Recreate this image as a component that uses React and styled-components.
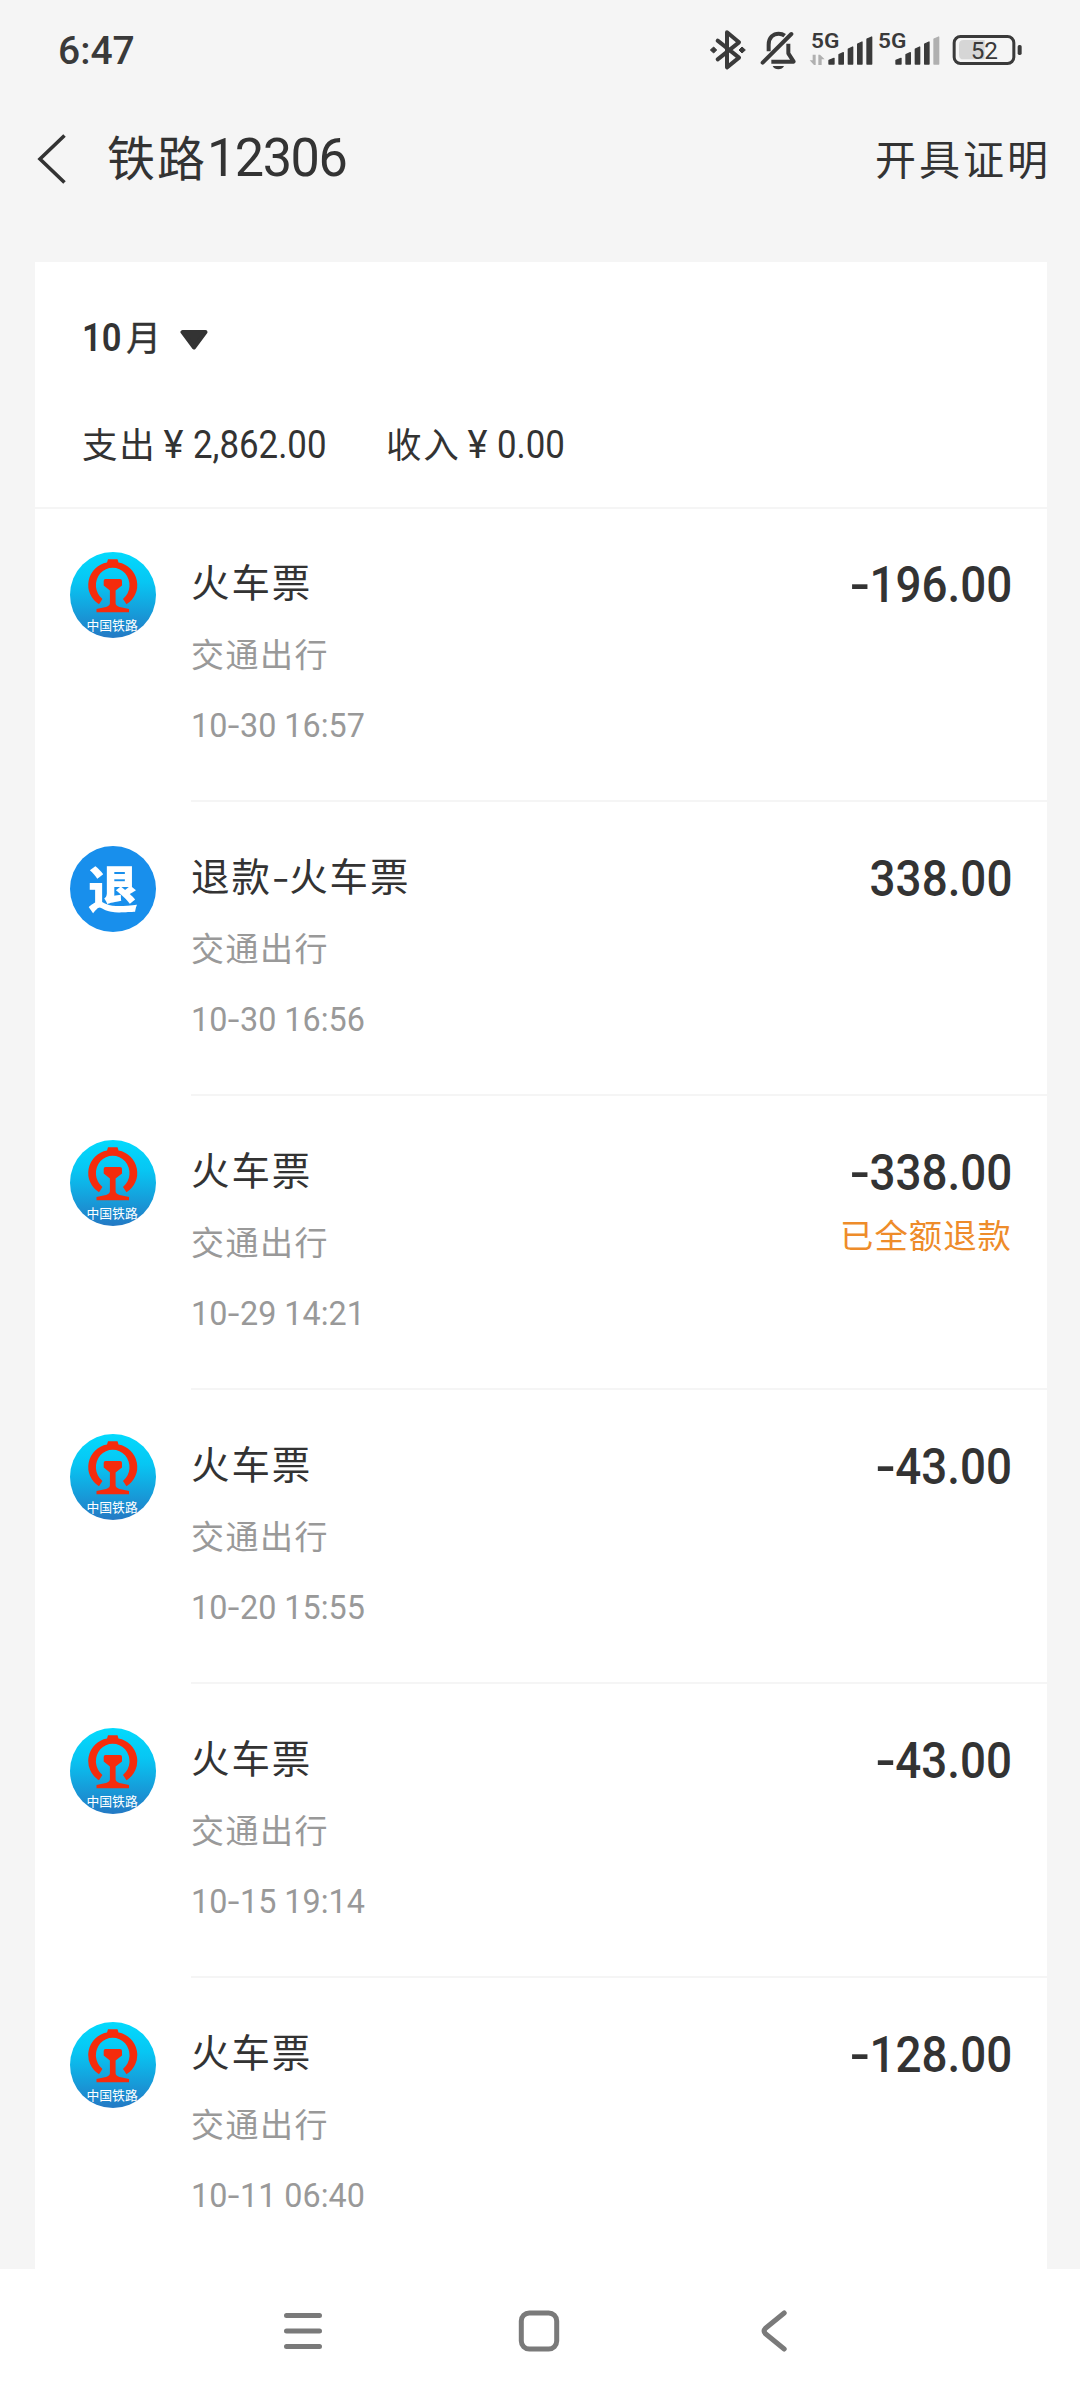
import styled, { createGlobalStyle } from 'styled-components';

const RECORDS = [
  { id: 1, title: '火车票', time: '10-30 16:57', amount: '-196.00' },
  { id: 2, title: '退款-火车票', time: '10-30 16:56', amount: '338.00', refund: true },
  { id: 3, title: '火车票', time: '10-29 14:21', amount: '-338.00', note: '已全额退款' },
  { id: 4, title: '火车票', time: '10-20 15:55', amount: '-43.00' },
  { id: 5, title: '火车票', time: '10-15 19:14', amount: '-43.00' },
  { id: 6, title: '火车票', time: '10-11 06:40', amount: '-128.00' },
];

export default function App() {
  return (
    <Screen>
      <GlobalStyle />
      <StatusBar />

      <Header>
        <BackIcon viewBox="0 0 30 50">
          <path d="M27.5 1.5 L3 25 L27.5 48.5" fill="none" stroke="#333" strokeWidth="3.6" />
        </BackIcon>
        <Title>铁路<TitleDigits>12306</TitleDigits></Title>
        <Action>开具证明</Action>
      </Header>

      <Card>
        <Summary>
          <Month>
            <MonthDigits>10</MonthDigits>
            <span>月</span>
            <Caret viewBox="0 0 28 20">
              <path d="M2.5 2 H25.5 L14 17.5 Z" fill="#333" stroke="#333" strokeWidth="4" strokeLinejoin="round" />
            </Caret>
          </Month>
          <Totals>
            <Total $w={304}>支出<Yen>¥</Yen><Sum>2,862.00</Sum></Total>
            <Total>收入<Yen>¥</Yen><Sum>0.00</Sum></Total>
          </Totals>
        </Summary>

        {RECORDS.map(r => (
          <Row key={r.id}>
            {r.refund ? <RefundBadge>退</RefundBadge> : <RailwayLogo id={r.id} />}
            <Detail>
              <Info>
                <Name><Dashed text={r.title} /></Name>
                <Category>交通出行</Category>
                <Time><Dashed text={r.time} /></Time>
              </Info>
              <Right>
                <Amount><Dashed text={r.amount} /></Amount>
                {r.note && <Note>{r.note}</Note>}
              </Right>
            </Detail>
          </Row>
        ))}
      </Card>

      <NavBar>
        <svg width="40" height="44" viewBox="0 0 40 44">
          <path d="M3.5 6.5 H36.5 M3.5 22 H36.5 M3.5 37.5 H36.5" stroke="#7a7a7a" strokeWidth="5" strokeLinecap="round" />
        </svg>
        <svg width="42" height="44" viewBox="0 0 42 44">
          <rect x="3.3" y="3.9" width="35.4" height="36.2" rx="8" fill="none" stroke="#7a7a7a" strokeWidth="5" />
        </svg>
        <svg width="28" height="44" viewBox="0 0 28 44">
          <path d="M24.2 4 L5.5 19.2 Q2.8 22 5.5 24.8 L24.2 40" fill="none" stroke="#7a7a7a" strokeWidth="5" strokeLinecap="round" strokeLinejoin="round" />
        </svg>
      </NavBar>
    </Screen>
  );
}

// Hyphens are drawn wider than the font's own
function Dashed({ text }) {
  const i = text.indexOf('-');
  if (i < 0) return text;
  return <>{text.slice(0, i)}<Dash>-</Dash>{text.slice(i + 1)}</>;
}

function StatusBar() {
  return (
    <Status>
      <Clock>6:47</Clock>
      <Tray>
        {/* bluetooth, connected */}
        <svg width="40" height="44" viewBox="84 54 120 132">
          <path d="M113 92 L177 143 L141 172 V67 L177 97 L113 148" fill="none" stroke="#3a3a3a" strokeWidth="12" strokeLinecap="round" strokeLinejoin="round" />
          <path d="M91 120 l10 -9 l9 9 l-9 9 z M196 120 l-10 -9 l-9 9 l9 9 z" fill="#3a3a3a" stroke="#3a3a3a" strokeWidth="3" strokeLinejoin="round" />
        </svg>
        {/* muted bell */}
        <BellIcon viewBox="240 54 114 132">
          <path d="M248 158 L334 72" stroke="#3a3a3a" strokeWidth="12" strokeLinecap="round" />
          <path d="M266 124 V104 C266 82 280 71 296 71 C304 71 309 73 314 77" fill="none" stroke="#3a3a3a" strokeWidth="12" />
          <path d="M325 101 V130 L341 155 H274" fill="none" stroke="#3a3a3a" strokeWidth="12" strokeLinejoin="round" />
          <path d="M278 168 H312 Q307 178 295 178 Q283 178 278 168 Z" fill="#3a3a3a" />
        </BellIcon>
        <Signal level={5} data />
        <Signal level={4} />
        <BatteryIcon viewBox="814 54 216 132">
          <rect x="823.5" y="79.5" width="179" height="81" rx="19" fill="none" stroke="#3a3a3a" strokeWidth="9" />
          <path d="M915 90 V148 H852 Q838 148 838 134 V104 Q838 90 852 90 Z" fill="#d6d6d6" />
          <rect x="1014" y="105" width="12" height="30" rx="5" fill="#3a3a3a" />
          <text x="873" y="147" fontSize="71" textLength="82" lengthAdjust="spacingAndGlyphs" fill="#3a3a3a">52</text>
        </BatteryIcon>
      </Tray>
    </Status>
  );
}

const BARS = [
  [445, 148, 464],
  [475, 131, 492],
  [503, 114, 520],
  [531, 99, 548],
  [559, 84, 577],
];

function Signal({ level, data }) {
  return (
    <SignalIcon $first={data} viewBox="387 54 195 132">
      <text x="393" y="113" fontSize="62" fontWeight="600" textLength="85" lengthAdjust="spacingAndGlyphs" fill="#3a3a3a">5G</text>
      {data && (
        <path d="M398 134 H407 V165 H402 L389 151 H398 Z M415 134 H420 L434 148 H425 V165 H415 Z" fill="#b0b0b0" />
      )}
      {BARS.map(([x, top, end], i) => (
        <path
          key={x}
          d={`M${x + 2} ${top + 3} L${end - 2} ${top - 3} V162 H${x + 2} Z`}
          fill={i < level ? '#3a3a3a' : '#b0b0b0'}
          stroke={i < level ? '#3a3a3a' : '#b0b0b0'}
          strokeWidth="4"
          strokeLinejoin="round"
        />
      ))}
    </SignalIcon>
  );
}

function RailwayLogo({ id }) {
  return (
    <Logo viewBox="0 0 86 86">
      <defs>
        <linearGradient id={`sky${id}`} x1="0" y1="0" x2="0" y2="1">
          <stop offset="0" stopColor="#03dafd" />
          <stop offset="0.35" stopColor="#07c6f3" />
          <stop offset="1" stopColor="#2379c4" />
        </linearGradient>
      </defs>
      <circle cx="43" cy="43" r="43" fill={`url(#sky${id})`} />
      <path d="M38 7.3 H47.5 L48.5 10.5 A22.8 22.8 0 0 1 56.5 52.3 L53 47 A16.8 17.5 0 1 0 32.4 47 L29 52.3 A22.8 22.8 0 0 1 37 10.5 Z" fill="#f52c0c" />
      <path d="M35.5 27 H50 Q52 27 52 29 V33.5 L45.6 38.5 V51.5 Q46 54.5 52 55.5 L59 57 V60.2 H26.5 V57 L33.5 55.5 Q39.5 54.5 39.9 51.5 V38.5 L33.7 33.5 V29 Q33.7 27 35.5 27 Z" fill="#f52c0c" />
      <text x="16.5" y="78" fontSize="12.8" fill="#fff">中国铁路</text>
    </Logo>
  );
}

/* ============ styles ============ */

const GlobalStyle = createGlobalStyle`
  * { box-sizing: border-box; }
  body { margin: 0; background: #f5f5f5; }
  svg { display: block; flex: none; }
`;

const Screen = styled.div`
  display: flex;
  flex-direction: column;
  width: 1080px;
  height: 2400px;
  overflow: hidden;
  background: #f5f5f5;
  color: #333;
  font-family: "Noto Sans CJK SC", sans-serif;
  white-space: nowrap;
`;

const Dash = styled.span`
  display: inline-block;
  margin: 0 2px;
  letter-spacing: 0;
  transform: scaleX(1.3);
`;

const Status = styled.div`
  display: flex;
  justify-content: space-between;
  align-items: center;
  height: 100px;
  flex: none;
  padding: 0 56.7px 0 58px;
  font-family: Roboto, sans-serif;
`;

const Clock = styled.div`
  font-size: 39px;
  font-weight: 500;
  line-height: 46px;
  color: #3a3a3a;
  padding-top: 2px;
`;

const Tray = styled.div`
  display: flex;
  align-items: center;
`;

const BellIcon = styled.svg`
  width: 38px;
  height: 44px;
  margin-left: 12px;
`;

const SignalIcon = styled.svg`
  width: 65px;
  height: 44px;
  margin-left: ${p => p.$first ? '11px' : '1.7px'};
`;

const BatteryIcon = styled.svg`
  width: 72px;
  height: 44px;
  margin-left: 10.6px;
`;

const Header = styled.header`
  display: flex;
  align-items: center;
  height: 118px;
  flex: none;
  padding: 0 29px 0 37px;
`;

const BackIcon = styled.svg`
  width: 30px;
  height: 50px;
`;

const Title = styled.h1`
  flex: 1;
  margin: 0 0 0 40px;
  font-size: 48px;
  font-weight: 400;
  line-height: 60px;
  letter-spacing: 2px;
  padding-bottom: 6px;
`;

const TitleDigits = styled.span`
  display: inline-block;
  font-family: Roboto, sans-serif;
  font-size: 53px;
  letter-spacing: -1.5px;
  transform: scaleX(.985);
  transform-origin: left;
`;

const Action = styled.div`
  font-size: 41px;
  line-height: 50px;
  letter-spacing: 3px;
  padding-bottom: 5px;
`;

const Card = styled.main`
  flex: 1;
  min-height: 0;
  margin: 44px 33px 0 35px;
  overflow: hidden;
  background: #fff;
`;

const Summary = styled.section`
  height: 247px;
  margin-bottom: -1px;
  padding: 50px 47px 0;
  border-bottom: 2px solid #f5f5f5;
`;

const Month = styled.div`
  display: flex;
  align-items: center;
  height: 48px;
  font-size: 35px;
  line-height: 46px;
  -webkit-text-stroke: .4px #333;
`;

const MonthDigits = styled.span`
  width: 44px;
  font-family: Roboto, sans-serif;
  font-size: 38px;
  font-weight: 600;
  padding-top: 3px;
  transform: scaleX(.91);
  transform-origin: left;
  -webkit-text-stroke: 0;
`;

const Caret = styled.svg`
  width: 28px;
  height: 20px;
  margin: 7px 0 0 19px;
`;

const Totals = styled.div`
  display: flex;
  margin-top: 56px;
`;

const Total = styled.div`
  display: flex;
  align-items: center;
  width: ${p => p.$w ? `${p.$w}px` : 'auto'};
  font-size: 35.5px;
  line-height: 50px;
  letter-spacing: 1.7px;
`;

const Yen = styled.span`
  width: 30px;
  margin-left: 7px;
  font-family: Roboto, sans-serif;
  font-size: 38px;
  letter-spacing: 0;
  padding-top: 4px;
`;

const Sum = styled.span`
  font-family: Roboto, sans-serif;
  font-size: 38.5px;
  letter-spacing: 0;
  padding-top: 4px;
  transform: scaleX(.905);
  transform-origin: left;
`;

const Row = styled.article`
  display: flex;
  height: 294px;
  padding-left: 35px;
`;

const Logo = styled.svg`
  width: 86px;
  height: 86px;
  margin-top: 44px;
`;

const RefundBadge = styled.div`
  width: 86px;
  height: 86px;
  flex: none;
  margin-top: 44px;
  border-radius: 50%;
  background: #188fec;
  color: #fff;
  font-size: 50px;
  font-weight: 900;
  line-height: 80px;
  text-align: center;
`;

const Detail = styled.div`
  display: flex;
  flex: 1;
  justify-content: space-between;
  margin-left: 35px;
  padding-right: 35px;
  border-bottom: 2px solid #f5f5f5;
`;

const Info = styled.div`
  padding-top: 48px;
`;

const Name = styled.div`
  font-size: 38.5px;
  line-height: 48px;
  letter-spacing: 1.9px;
`;

const Category = styled.div`
  margin-top: 28px;
  font-size: 33px;
  line-height: 42px;
  letter-spacing: 1.5px;
  color: #999;
`;

const Time = styled.div`
  margin-top: 31px;
  font-family: Roboto, sans-serif;
  font-size: 34px;
  line-height: 40px;
  color: #999;
  transform: scaleX(.95);
  transform-origin: left;
`;

const Right = styled.div`
  padding-top: 47px;
  text-align: right;
`;

const Amount = styled.div`
  font-family: Roboto, sans-serif;
  font-size: 49.5px;
  font-weight: 500;
  line-height: 60px;
  transform: scaleX(.925);
  transform-origin: right;
`;

const Note = styled.div`
  margin-top: 10px;
  font-size: 33.3px;
  line-height: 42px;
  letter-spacing: 1.1px;
  color: #ee8c2a;
`;

const NavBar = styled.nav`
  display: flex;
  align-items: center;
  justify-content: flex-start;
  flex: none;
  height: 131px;
  padding: 0 0 8px 283px;
  background: #fff;

  svg + svg { margin-left: 195px; }
  svg:last-child { margin-left: 200px; }
`;
